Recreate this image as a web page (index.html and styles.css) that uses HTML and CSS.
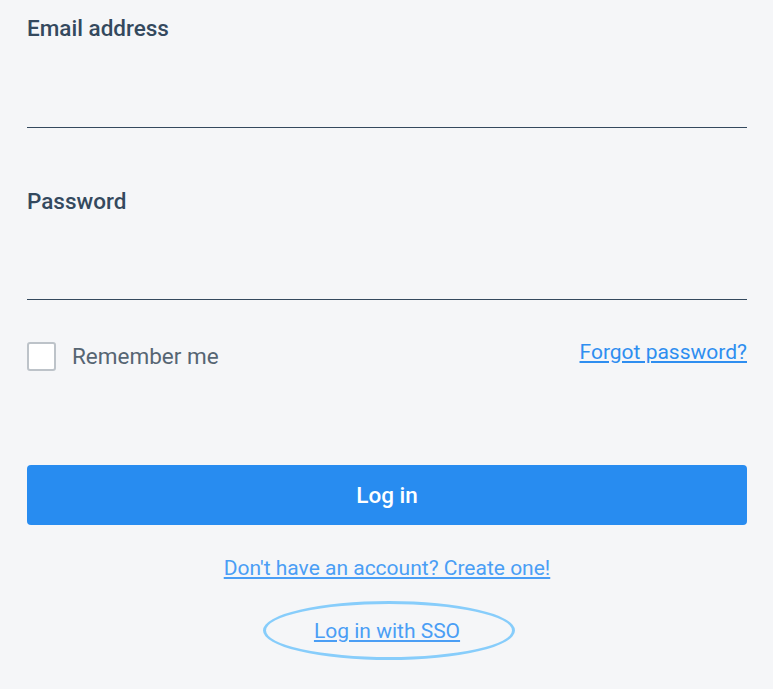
FILE: index.html
```html
<!DOCTYPE html>
<html lang="en">
<head>
<meta charset="utf-8">
<title>Log in</title>
<link rel="stylesheet" href="styles.css">
</head>
<body>
<form class="login">
  <div class="field">
    <label class="label" for="email">Email address</label>
    <input class="input" id="email" type="email">
  </div>
  <div class="field">
    <label class="label" for="password">Password</label>
    <input class="input short" id="password" type="password">
  </div>
  <div class="options">
    <label class="remember"><span class="box"></span><span>Remember me</span></label>
    <a class="link forgot" href="#">Forgot password?</a>
  </div>
  <button class="btn" type="button">Log in</button>
  <div class="links">
    <a class="link alt" href="#">Don't have an account? Create one!</a>
    <span class="sso-ring">
      <a class="link alt" href="#">Log in with SSO</a>
    </span>
  </div>
</form>
</body>
</html>
```
FILE: styles.css
```css
html, body {
  margin: 0;
  padding: 0;
  background: #f5f6f8;
}
body {
  font-family: Roboto, "Liberation Sans", sans-serif;
}
.login {
  padding: 13px 26px 0 27px;
  display: flex;
  flex-direction: column;
}
.field {
  display: flex;
  flex-direction: column;
  margin-bottom: 58px;
}
.field + .field {
  margin-bottom: 0;
}
.label {
  font-size: 22.5px;
  font-weight: 500;
  color: #34495e;
  line-height: 30px;
}
.input {
  display: block;
  border: 0;
  border-bottom: 1px solid #34495e;
  background: transparent;
  height: 85px;
  padding: 0;
  margin: 0;
  outline: none;
  box-sizing: border-box;
}
.input.short {
  height: 84px;
}
.options {
  display: flex;
  justify-content: space-between;
  align-items: flex-start;
  height: 165px;
}
.remember {
  display: flex;
  align-items: center;
  gap: 16px;
  font-size: 22.5px;
  line-height: 29px;
  color: #566573;
  margin-top: 42px;
}
.box {
  width: 25px;
  height: 25px;
  border: 2px solid #bdc3c9;
  border-radius: 3px;
  background: #fff;
}
.link {
  color: #2e8ef0;
  text-decoration: underline;
  font-size: 21px;
  line-height: 24px;
}
.forgot {
  margin-top: 40px;
}
.btn {
  height: 60px;
  border: 0;
  border-radius: 4px;
  background: #288cf0;
  color: #fff;
  font-family: Roboto, "Liberation Sans", sans-serif;
  font-size: 22.5px;
  font-weight: 500;
  padding: 0;
  cursor: pointer;
}
.links {
  display: flex;
  flex-direction: column;
  align-items: center;
  margin-top: 31px;
}
.alt {
  color: #4a9ef5;
}
.sso-ring {
  display: flex;
  align-items: center;
  justify-content: center;
  box-sizing: border-box;
  width: 252px;
  height: 59px;
  margin-top: 21px;
  margin-left: 4px;
  padding-right: 4px;
  border: 3px solid #87cdfb;
  border-radius: 50%;
}
```
